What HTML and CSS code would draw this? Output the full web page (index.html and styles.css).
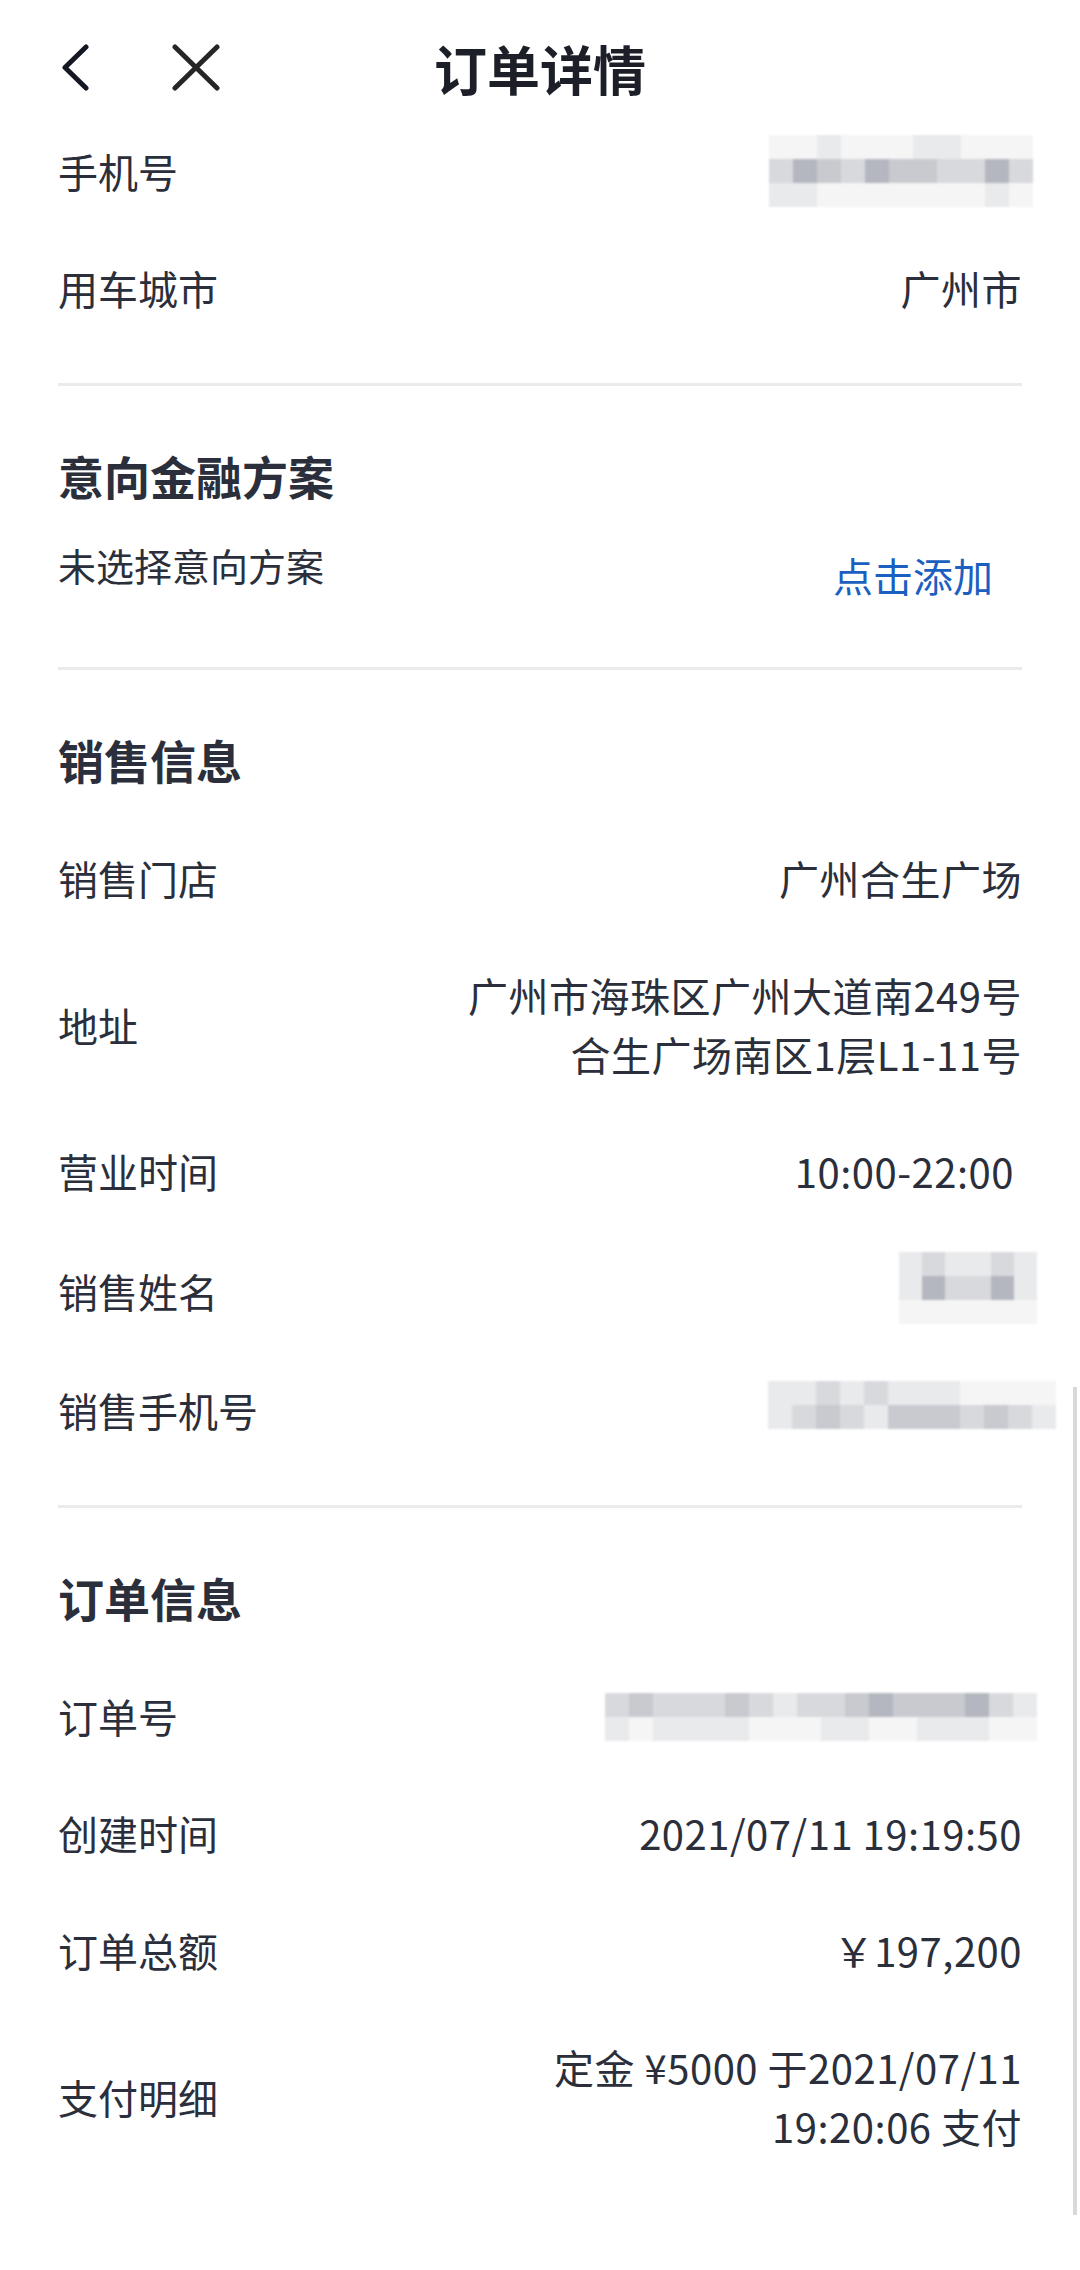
FILE: index.html
```html
<!DOCTYPE html>
<html lang="zh-CN">
<head>
    <meta charset="UTF-8">
    <meta name="viewport" content="width=device-width, initial-scale=1.0">
    <title>订单详情</title>
    <link rel="stylesheet" href="styles.css">
</head>
<body>

<header class="topbar">
    <div class="nav-icons">
        <svg class="icon-back" viewBox="0 0 32 47" width="32" height="47">
            <polyline points="28,3 7,23.5 28,44" />
        </svg>
        <svg class="icon-close" viewBox="0 0 52 47" width="52" height="47">
            <line x1="5" y1="3" x2="47" y2="44" />
            <line x1="47" y1="3" x2="5" y2="44" />
        </svg>
    </div>
    <h1 class="page-title">订单详情</h1>
    <div></div>
</header>

<main class="content">
    <!-- 客户信息 -->
    <section class="block">
        <div class="row">
            <span class="label">手机号</span>
            <span class="mosaic mosaic-phone">
                <i class="m0"></i><i class="m0"></i><i class="m1"></i><i class="m0"></i><i class="m0"></i><i class="m0"></i><i class="m1"></i><i class="m1"></i><i class="m0"></i><i class="m0"></i><i class="m0"></i>
                <i class="m2"></i><i class="m4"></i><i class="m3"></i><i class="m2"></i><i class="m4"></i><i class="m3"></i><i class="m3"></i><i class="m2"></i><i class="m2"></i><i class="m4"></i><i class="m2"></i>
                <i class="m1"></i><i class="m1"></i><i class="m0"></i><i class="m0"></i><i class="m0"></i><i class="m0"></i><i class="m0"></i><i class="m0"></i><i class="m0"></i><i class="m1"></i><i class="m0"></i>
            </span>
        </div>
        <div class="row">
            <span class="label">用车城市</span>
            <span class="value">广州市</span>
        </div>
    </section>

    <!-- 意向金融方案 -->
    <section class="block">
        <h2 class="block-title">意向金融方案</h2>
        <div class="plan-row">
            <span class="plan-empty">未选择意向方案</span>
            <a class="plan-add" href="#">点击添加</a>
        </div>
    </section>

    <!-- 销售信息 -->
    <section class="block">
        <h2 class="block-title">销售信息</h2>
        <div class="row">
            <span class="label">销售门店</span>
            <span class="value">广州合生广场</span>
        </div>
        <div class="row">
            <span class="label">地址</span>
            <span class="value">广州市海珠区广州大道南249号合生广场南区1层L1-11号</span>
        </div>
        <div class="row">
            <span class="label">营业时间</span>
            <span class="value value-time">10:00-22:00</span>
        </div>
        <div class="row">
            <span class="label">销售姓名</span>
            <span class="mosaic mosaic-name">
                <i class="m1"></i><i class="m2"></i><i class="m1"></i><i class="m1"></i><i class="m2"></i><i class="m1"></i>
                <i class="m1"></i><i class="m4"></i><i class="m2"></i><i class="m2"></i><i class="m4"></i><i class="m1"></i>
                <i class="m0"></i><i class="m0"></i><i class="m0"></i><i class="m0"></i><i class="m0"></i><i class="m0"></i>
            </span>
        </div>
        <div class="row">
            <span class="label">销售手机号</span>
            <span class="mosaic mosaic-sales">
                <i class="m1"></i><i class="m1"></i><i class="m2"></i><i class="m1"></i><i class="m2"></i><i class="m1"></i><i class="m1"></i><i class="m1"></i><i class="m0"></i><i class="m0"></i><i class="m0"></i><i class="m0"></i>
                <i class="m1"></i><i class="m2"></i><i class="m3"></i><i class="m2"></i><i class="m1"></i><i class="m3"></i><i class="m3"></i><i class="m3"></i><i class="m2"></i><i class="m3"></i><i class="m2"></i><i class="m1"></i>
            </span>
        </div>
    </section>

    <!-- 订单信息 -->
    <section class="block">
        <h2 class="block-title">订单信息</h2>
        <div class="row">
            <span class="label">订单号</span>
            <span class="mosaic mosaic-order">
                <i class="m2"></i><i class="m3"></i><i class="m2"></i><i class="m2"></i><i class="m2"></i><i class="m3"></i><i class="m2"></i><i class="m1"></i><i class="m2"></i><i class="m2"></i><i class="m3"></i><i class="m4"></i><i class="m3"></i><i class="m3"></i><i class="m3"></i><i class="m4"></i><i class="m2"></i><i class="m1"></i>
                <i class="m1"></i><i class="m0"></i><i class="m1"></i><i class="m1"></i><i class="m1"></i><i class="m1"></i><i class="m0"></i><i class="m0"></i><i class="m0"></i><i class="m1"></i><i class="m1"></i><i class="m0"></i><i class="m0"></i><i class="m1"></i><i class="m1"></i><i class="m1"></i><i class="m0"></i><i class="m0"></i>
            </span>
        </div>
        <div class="row">
            <span class="label">创建时间</span>
            <span class="value">2021/07/11 19:19:50</span>
        </div>
        <div class="row">
            <span class="label">订单总额</span>
            <span class="value">￥197,200</span>
        </div>
        <div class="row">
            <span class="label">支付明细</span>
            <span class="value">定金 ¥5000 于2021/07/11 19:20:06 支付</span>
        </div>
    </section>
</main>

<div class="scrollbar"></div>

</body>
</html>
```

FILE: styles.css
```css
/* Order detail page */
body {
    margin: 0;
    padding: 0;
    background: #fff;
    color: #2b2f3b;
    font-family: "Noto Sans CJK SC", "Noto Sans", sans-serif;
    position: relative;
    min-height: 2270px;
}

.topbar {
    height: 113px;
    box-sizing: border-box;
    padding: 22px 58px 0;
    display: grid;
    grid-template-columns: 1fr auto 1fr;
    align-items: center;
}

.nav-icons {
    display: flex;
    align-items: center;
}

.nav-icons svg {
    display: block;
    fill: none;
    stroke-width: 5;
    stroke-linecap: round;
    stroke-linejoin: round;
}

.icon-back {
    stroke: #151822;
}

.icon-close {
    stroke: #262626;
    margin-left: 80px;
}

.page-title {
    margin: 0;
    font-size: 53px;
    font-weight: 700;
    line-height: 70px;
    color: #1c1f27;
}

.content {
    padding: 0 58px;
}

.block {
    padding-bottom: 36px;
}

.block + .block {
    border-top: 3px solid #ebebed;
    padding-top: 56px;
}

.block-title {
    margin: 0 0 28px;
    font-size: 46px;
    font-weight: 700;
    line-height: 66px;
}

.row {
    display: flex;
    justify-content: space-between;
    align-items: center;
    padding: 29px 0;
    font-size: 40px;
    line-height: 59px;
}

.label {
    flex-shrink: 0;
}

.value {
    text-align: right;
    max-width: 570px;
    letter-spacing: 0.5px;
}

.value-time {
    margin-right: 8px;
}

.plan-row {
    display: flex;
    justify-content: space-between;
    align-items: flex-start;
    margin-top: 1px;
    margin-bottom: 17px;
}

.plan-empty {
    font-size: 38px;
    line-height: 58px;
}

.plan-add {
    font-size: 40px;
    line-height: 78px;
    color: #1b5fc1;
    text-decoration: none;
    margin-right: 29px;
}

/* blurred personal data */
.mosaic {
    display: grid;
    grid-auto-rows: 24px;
    filter: blur(1.2px);
}

.mosaic i {
    display: block;
}

.mosaic-phone {
    grid-template-columns: repeat(11, 24px);
    margin: -8px -11px -6px 0;
}

.mosaic-name {
    grid-template-columns: repeat(6, 23px);
    margin: -7px -15px -1px 0;
}

.mosaic-sales {
    grid-template-columns: repeat(12, 24px);
    margin: -24px -34px -20px 0;
    transform: translateY(-4px);
}

.mosaic-order {
    grid-template-columns: repeat(18, 24px);
    margin: 0 -15px 0 0;
}

.m0 { background: #f5f5f6; }
.m1 { background: #e9eaec; }
.m2 { background: #d8d9dd; }
.m3 { background: #c8cacf; }
.m4 { background: #b4b7bf; }

.scrollbar {
    position: absolute;
    top: 1387px;
    right: 3px;
    width: 4px;
    height: 828px;
    background: #d9d9d9;
}
```
